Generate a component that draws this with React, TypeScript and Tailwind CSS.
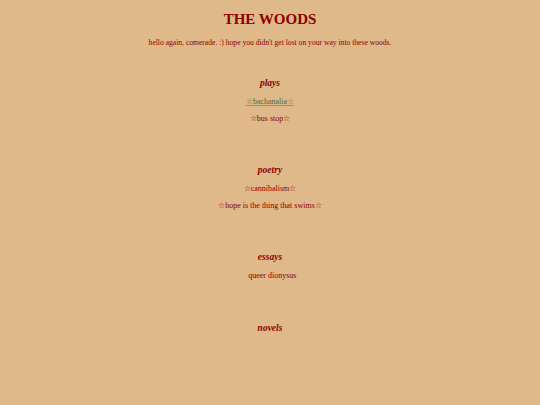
import React from "react";

const serif = { fontFamily: '"Liberation Serif", "Times New Roman", serif' };

function Section({ title, items, first }: { title: string; items: React.ReactNode[]; first?: boolean }) {
  return (
    <div className={first ? "mt-[29px] flex flex-col items-center" : "mt-[40px] flex flex-col items-center"}>
      <h2 className="text-[9.5px] leading-[12px] font-bold italic text-[#8b0000]">{title}</h2>
      {items.map((it, i) => (
        <div key={i} className={i === 0 ? "mt-[8px] text-[8px] leading-[10px]" : "mt-[7px] text-[8px] leading-[10px]"}>
          {it}
        </div>
      ))}
    </div>
  );
}

export default function App() {
  return (
    <div className="w-[540px] h-[405px] bg-[#e0b98a] text-[#8b0000] text-center overflow-hidden" style={serif}>
      <div className="pt-[9px] flex flex-col items-center">
        <h1 className="text-[15px] leading-[20px] font-bold">THE WOODS</h1>
        <p className="mt-[9px] text-[7.6px] leading-[10px]">
          hello again, comerade. :) hope you didn't get lost on your way into these woods.
        </p>
      </div>
      <Section
        first
        title="plays"
        items={[
          <a className="text-[#556b2f] underline decoration-[#8a9a5b]">☆bachanalia☆</a>,
          <span>☆bus stop☆</span>,
        ]}
      />
      <Section
        title="poetry"
        items={[<span>☆cannibalism☆</span>, <span>☆hope is the thing that swims☆</span>]}
      />
      <Section
        title="essays"
        items={[
          <span>
            <span className="text-[#d9ae80]">·</span> queer dionysus
          </span>,
        ]}
      />
      <div className="mt-[41px] flex flex-col items-center">
        <h2 className="text-[9.5px] leading-[12px] font-bold italic text-[#8b0000]">novels</h2>
      </div>
    </div>
  );
}
